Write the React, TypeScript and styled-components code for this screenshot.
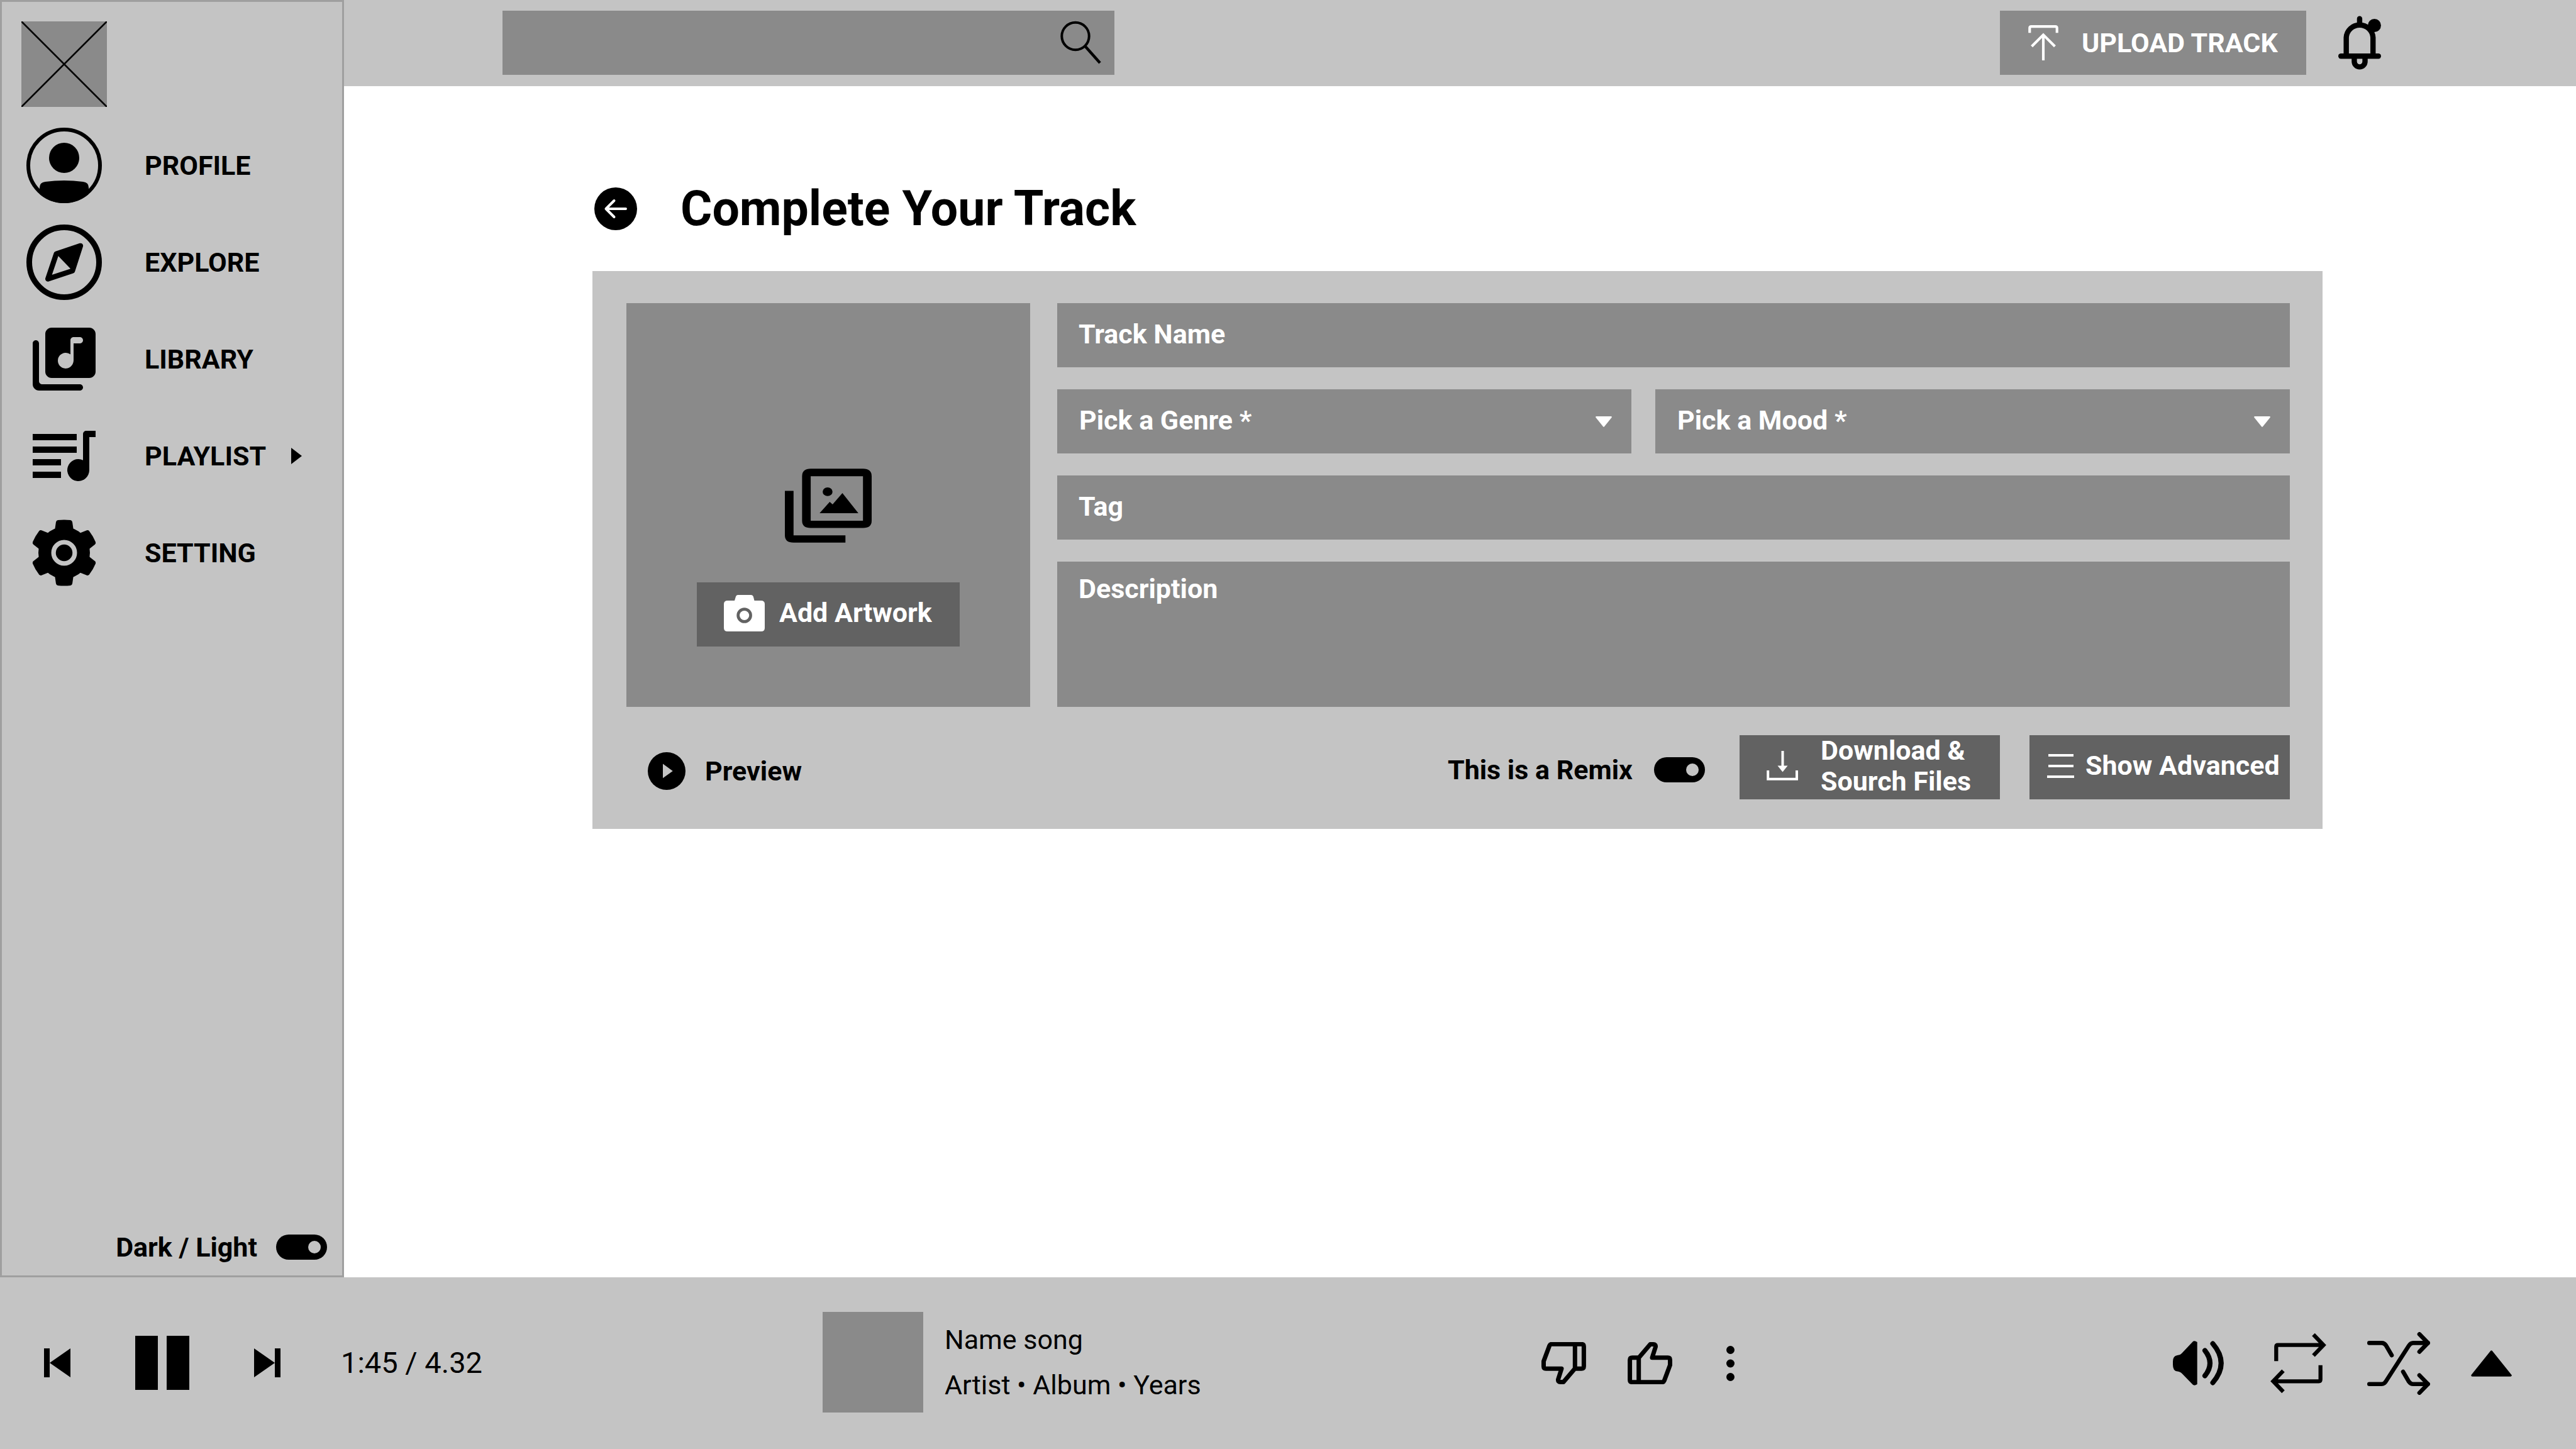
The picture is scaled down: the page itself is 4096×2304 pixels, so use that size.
import React from "react";
import styled, { createGlobalStyle } from "styled-components";

const color = {
  surface: "#c4c4c4",
  field: "#8a8a8a",
  dark: "#626262",
  line: "#9f9f9f",
  ink: "#000000",
  paper: "#ffffff",
};

const Global = createGlobalStyle`
  *, *::before, *::after { box-sizing: border-box; }
  body { margin: 0; background: ${color.paper}; color: ${color.ink}; }
  body, button, input, select, textarea {
    font-family: Roboto, "Liberation Sans", sans-serif;
    font-size: 43px;
    line-height: 49px;
    font-weight: 700;
  }
  button { border: 0; padding: 0; background: none; color: inherit; cursor: pointer; }
  a { color: inherit; text-decoration: none; }
  svg { display: block; flex: none; }
`;

const Page = styled.div`
  min-height: 100vh;
  display: flex;
  flex-direction: column;
`;

const Body = styled.div`
  flex: 1;
  display: flex;
`;

const Sidebar = styled.aside`
  width: 547px;
  flex: none;
  display: flex;
  flex-direction: column;
  padding: 31px 24px 25px 31px;
  background: ${color.surface};
  border: 3px solid ${color.line};
`;

const Logo = styled.a`
  width: 136px;
  height: 136px;
  background: ${color.field};
`;

const Nav = styled.nav`
  display: flex;
  flex-direction: column;
  gap: 34px;
  margin-top: 33px;
`;

const NavItem = styled.a`
  height: 120px;
  display: flex;
  align-items: center;
  gap: 60px;
`;

const NavIcon = styled.span`
  width: 136px;
  display: flex;
  justify-content: center;
`;

const NavText = styled.span`
  display: flex;
  align-items: center;
  gap: 40px;
`;

const ToggleLabel = styled.label<{ $gap: number }>`
  display: flex;
  align-items: center;
  gap: ${(p) => p.$gap}px;
  cursor: pointer;
`;

const ThemeRow = styled.div`
  margin-top: auto;
  display: flex;
  justify-content: flex-end;
  height: 40px;
  align-items: center;
`;

const Toggle = styled.input`
  appearance: none;
  margin: 0;
  width: 81px;
  height: 40px;
  padding: 0 10px;
  border-radius: 20px;
  background: ${color.ink};
  display: flex;
  align-items: center;
  justify-content: flex-start;
  cursor: pointer;
  &::before {
    content: "";
    width: 20px;
    height: 20px;
    border-radius: 50%;
    background: ${color.surface};
  }
  &:checked { justify-content: flex-end; }
`;

const Column = styled.div`
  flex: 1;
  min-width: 0;
`;

const Header = styled.header`
  display: flex;
  align-items: center;
  padding: 17px 310px 18px 252px;
  background: ${color.surface};
`;

const Search = styled.form`
  flex: 0 1 973px;
  height: 102px;
  display: flex;
  align-items: center;
  padding: 0 20px 0 34px;
  background: ${color.field};
`;

const SearchInput = styled.input`
  flex: 1;
  min-width: 0;
  border: 0;
  outline: 0;
  background: none;
  color: ${color.paper};
`;

const UploadButton = styled.button`
  margin-left: auto;
  width: 487px;
  height: 102px;
  display: flex;
  align-items: center;
  gap: 37px;
  padding-left: 45px;
  background: ${color.field};
  color: ${color.paper};
`;

const BellButton = styled.button`
  margin-left: 51px;
`;

const Main = styled.main`
  padding: 157px 403px 0 395px;
`;

const TitleRow = styled.div`
  display: flex;
  align-items: center;
  gap: 69px;
  padding-left: 3px;
`;

const Title = styled.h1`
  margin: 0;
  font-size: 77px;
  line-height: 76px;
  font-weight: 700;
`;

const Panel = styled.form`
  margin-top: 61px;
  padding: 51px 52px 47px 54px;
  background: ${color.surface};
`;

const PanelTop = styled.div`
  display: flex;
  gap: 43px;
`;

const Artwork = styled.div`
  width: 642px;
  height: 642px;
  flex: none;
  display: flex;
  flex-direction: column;
  align-items: center;
  justify-content: flex-end;
  gap: 63px;
  padding-bottom: 96px;
  background: ${color.field};
`;

const DarkButton = styled.button<{ $width: number; $gap: number; $pad: number }>`
  width: ${(p) => p.$width}px;
  height: 102px;
  display: flex;
  align-items: center;
  gap: ${(p) => p.$gap}px;
  padding: 0 0 5px ${(p) => p.$pad}px;
  background: ${color.dark};
  color: ${color.paper};
  text-align: left;
  white-space: nowrap;
`;

const Fields = styled.div`
  flex: 1;
  min-width: 0;
  display: flex;
  flex-direction: column;
  gap: 35px;
`;

const PickRow = styled.div`
  display: grid;
  grid-template-columns: 913fr 1009fr;
  gap: 38px;
`;

const TextField = styled.input`
  height: 102px;
  border: 0;
  border-radius: 0;
  outline: 0;
  padding: 0 34px 4px;
  background: ${color.field};
  color: ${color.paper};
  &::placeholder { color: ${color.paper}; opacity: 1; }
`;

const TextArea = styled.textarea`
  flex: 1;
  border: 0;
  outline: 0;
  resize: none;
  padding: 19px 34px;
  background: ${color.field};
  color: ${color.paper};
  &::placeholder { color: ${color.paper}; opacity: 1; }
`;

const PickBox = styled.div`
  height: 102px;
  display: flex;
  align-items: center;
  padding: 0 31px 0 35px;
  background: ${color.field};
`;

const Select = styled.select`
  appearance: none;
  flex: 1;
  min-width: 0;
  border: 0;
  outline: 0;
  padding: 0 0 4px;
  background: none;
  color: ${color.paper};
`;

const PanelBottom = styled.div`
  margin-top: 45px;
  display: flex;
  align-items: center;
`;

const PreviewButton = styled.button`
  display: flex;
  align-items: center;
  gap: 31px;
  padding: 12px 0 0 34px;
`;

const RemixBox = styled.div`
  margin: 0 55px 0 auto;
  padding-top: 8px;
`;

const PanelActions = styled.div`
  display: flex;
  gap: 47px;
`;

const Player = styled.footer`
  display: grid;
  grid-template-columns: 1308fr 1143fr 1645fr;
  align-items: center;
  padding: 55px 0 58px;
  background: ${color.surface};
  font-weight: 400;
`;

const Transport = styled.div`
  display: flex;
  align-items: center;
  gap: 96px;
  padding: 2px 0 0 70px;
`;

const Time = styled.span`
  font-size: 47px;
  line-height: 54px;
`;

const Song = styled.div`
  display: flex;
  align-items: center;
  gap: 34px;
`;

const Cover = styled.div`
  width: 160px;
  height: 160px;
  background: ${color.field};
`;

const SongLine = styled.p`
  margin: 0;
  line-height: 72px;
`;

const PlayerEnd = styled.div`
  display: flex;
  align-items: center;
  justify-content: space-between;
  padding: 3px 102px 0 0;
`;

const IconRow = styled.div<{ $gap: number }>`
  display: flex;
  align-items: center;
  gap: ${(p) => p.$gap}px;
`;

const MoreButton = styled.button`
  padding: 0 20px;
`;

const stroke = { fill: "none", stroke: "currentColor" } as const;

const LogoMark = () => (
  <svg width="136" height="136" viewBox="0 0 136 136" {...stroke} strokeWidth="2.5" strokeLinecap="round">
    <path d="M1 1 135 135M135 1 1 135" />
  </svg>
);

const ProfileIcon = () => (
  <svg width="120" height="120" viewBox="0 0 120 120">
    <circle cx="60" cy="60" r="57" {...stroke} strokeWidth="6" />
    <circle cx="60" cy="48" r="24" />
    <path d="M21 105.600V95Q21 87 30 86Q60 82 90 86Q99 87 99 95V105.600A60 60 0 0 1 21 105.600Z" />
  </svg>
);

const ExploreIcon = () => (
  <svg width="120" height="120" viewBox="-60 -60 120 120">
    <circle r="55.500" {...stroke} strokeWidth="9" />
    <path d="M-12.500 -13.300 26 -26.200 13.200 13.600Z" />
    <path d="M-12.500 -13.300 26 -26.200 13.200 13.600 -25.900 26.500Z" {...stroke} strokeWidth="8.300" strokeLinejoin="round" />
  </svg>
);

const LibraryIcon = () => (
  <svg width="120" height="120" viewBox="0 0 24 24">
    <path d="M20 2H8c-1.100 0-2 .9-2 2v12c0 1.100.9 2 2 2h12c1.100 0 2-.9 2-2V4c0-1.100-.9-2-2-2zm-3 5h-2v5.370c0 1.270-.9 2.440-2.160 2.600-1.690.23-3.110-1.250-2.800-2.950.2-1.100 1.180-1.950 2.300-2.020.63-.04 1.200.16 1.660.51V6c0-.55.45-1 1-1h2c.55 0 1 .45 1 1s-.45 1-1 1zM3 6c-.55 0-1 .45-1 1v13c0 1.100.9 2 2 2h13c.55 0 1-.45 1-1s-.45-1-1-1H5c-.55 0-1-.45-1-1V7c0-.55-.45-1-1-1z" />
  </svg>
);

const PlaylistIcon = () => (
  <svg width="120" height="120" viewBox="0 0 24 24">
    <path d="M2 5h14v2H2zM2 9h14v2H2zM2 13h9v2H2zM2 17h9v2H2z" />
    <path d="M22 4v2h-2v10.500a3.500 3.500 0 1 1-2-3.160V5a1 1 0 0 1 1-1z" />
  </svg>
);

const SettingIcon = () => (
  <svg width="120" height="120" viewBox="-12 -12 24 24">
    <circle r="6.150" {...stroke} strokeWidth="4.100" />
    <circle r="2.650" />
    {[0, 60, 120, 180, 240, 300].map((a) => (
      <path
        key={a}
        transform={`rotate(${a})`}
        d="M-2.950 -7.400L-2.600 -9.800Q-2.500 -10.300 -2 -10.380Q0 -10.650 2 -10.380Q2.500 -10.300 2.600 -9.800L2.950 -7.400Z"
      />
    ))}
  </svg>
);

const RightCaret = () => (
  <svg width="17" height="26" viewBox="0 0 17 26">
    <path d="M0 0 17 13 0 26Z" />
  </svg>
);

const SearchIcon = () => (
  <svg width="66" height="70" viewBox="0 0 66 70" {...stroke} strokeWidth="4">
    <circle cx="24" cy="24.500" r="21.700" />
    <path d="M39 40 63 67" strokeWidth="4.500" />
  </svg>
);

const UploadIcon = () => (
  <svg width="48" height="56" viewBox="0 0 62 73" {...stroke} strokeWidth="5.400">
    <path d="M2.700 16V6Q2.700 2.700 6 2.700H56Q59.300 2.700 59.300 6V16M31 73V19.500M7 44 31 20 55 44" />
  </svg>
);

const BellIcon = () => (
  <svg width="68" height="86" viewBox="0 0 89 112">
    <g {...stroke} strokeWidth="11">
      <path d="M16.600 80V45.200A27.900 27.900 0 0 1 72.300 45.200V80" />
      <path d="M44.400 16V5.800" strokeLinecap="round" />
      <path d="M33.300 86V95A11.200 11.200 0 0 0 55.700 95V86" />
      <path d="M5.500 83.800H83.500" strokeLinecap="round" />
    </g>
    <circle cx="75.200" cy="20" r="13.700" />
  </svg>
);

const BackIcon = () => (
  <svg width="68" height="68" viewBox="0 0 68 68">
    <circle cx="34" cy="34" r="34" />
    <path d="M31.500 21 18.500 34 31.500 47M18.500 34H50" fill="none" stroke="#fff" strokeWidth="4" strokeLinecap="round" strokeLinejoin="round" />
  </svg>
);

const PhotosIcon = () => (
  <svg width="138" height="118" viewBox="0 0 180 153">
    <path d="M0 46H18V138H125.600V153H18Q0 153 0 138Z" />
    <path fillRule="evenodd" d="M53.600 0H162Q180 0 180 15.500V107.700Q180 122.700 162 122.700H53.600Q35.700 122.700 35.700 107.700V15.500Q35.700 0 53.600 0ZM53.600 15.500V107.700H162V15.500Z" />
    <ellipse cx="88.600" cy="47.700" rx="10.200" ry="9" />
    <path d="M72 92 93 68.600 99 74 119.300 50.400 152.400 92Z" />
  </svg>
);

const CameraIcon = () => (
  <svg width="65" height="58" viewBox="0 0 65 58">
    <path
      fill="#fff"
      fillRule="evenodd"
      d="M17 9 19 2.500Q19.700 0 22 0H43.500Q46 0 46.800 2.500L48.500 9H59Q65 9 65 14.500V52.500Q65 58 59 58H6Q0 58 0 52.500V14.500Q0 9 6 9ZM32.600 20.200A12.300 12.300 0 1 0 32.600 44.800A12.300 12.300 0 1 0 32.600 20.200Z"
    />
    <circle cx="32.600" cy="32.500" r="7.600" fill="#fff" />
  </svg>
);

const DownCaret = () => (
  <svg width="26" height="17" viewBox="0 0 26 17" fill="#fff">
    <path d="M1 0H25Q26.500 .5 25.500 2L14 16.300Q13 17.300 12 16.300L.5 2Q-.5 .5 1 0Z" />
  </svg>
);

const PreviewIcon = () => (
  <svg width="60" height="60" viewBox="0 0 78 78">
    <circle cx="39" cy="39" r="39" />
    <path d="M31.200 24 51.700 39 31.200 53.700Z" fill={color.surface} />
  </svg>
);

const DownloadIcon = () => (
  <svg width="50" height="47" viewBox="0 0 50 47" {...stroke} strokeWidth="4">
    <path d="M25.500 0V25" />
    <path d="M17.500 23.500H33.500L25.500 33.500Z" fill="currentColor" stroke="none" />
    <path d="M2.200 31V44.800H48V31" />
  </svg>
);

const MenuIcon = () => (
  <svg width="43" height="38" viewBox="0 0 43 38" {...stroke} strokeWidth="4">
    <path d="M2 2H42M2 19H42M0 36H43" />
  </svg>
);

const PreviousIcon = () => (
  <svg width="42" height="46" viewBox="0 0 42 46">
    <path d="M0 0H9V46H0ZM42 0V46L9 23Z" />
  </svg>
);

const NextIcon = () => (
  <svg width="42" height="46" viewBox="0 0 42 46">
    <path d="M42 0H33V46H42ZM0 0V46L33 23Z" />
  </svg>
);

const PauseIcon = () => (
  <svg width="86" height="86" viewBox="0 0 86 86">
    <path d="M0 0H36V86H0ZM50 0H86V86H50Z" />
  </svg>
);

const ThumbIcon = ({ down = false }: { down?: boolean }) => (
  <svg width="71" height="67" viewBox="0 0 71 67" {...stroke} strokeWidth="7" strokeLinejoin="round">
    <path
      transform={down ? "rotate(180 35.500 33.500)" : undefined}
      d="M17.700 24.800H7.500Q3.600 24.800 3.600 28.500V60Q3.600 63.700 7.500 63.700H55Q57.300 63.700 58.200 61.500L67.500 36.500V28.500Q67.500 24.800 64 24.800H39L44.500 7.500Q45 3.500 41 3.500H36L17.700 25V63.700"
    />
  </svg>
);

const MoreIcon = () => (
  <svg width="13" height="56" viewBox="0 0 13 56">
    <circle cx="6.500" cy="6.500" r="6.500" />
    <circle cx="6.500" cy="28" r="6.500" />
    <circle cx="6.500" cy="49.500" r="6.500" />
  </svg>
);

const VolumeIcon = () => (
  <svg width="90" height="71" viewBox="0 0 90 71">
    <path d="M7 23Q0 24 0 33V38Q0 48 7 48.500Q12 49 14.500 52L31.500 69.500Q34 72 38.700 69V2Q34 -1 31.500 1.500L14.500 19.500Q12 22.500 7 23Z" />
    <path d="M51 15.400Q67 35.500 51 55.600M63.500 4.500Q90 35.500 63.500 66.500" {...stroke} strokeWidth="8" strokeLinecap="round" />
  </svg>
);

const RepeatIcon = () => (
  <svg width="89" height="95" viewBox="0 0 89 95" {...stroke} strokeWidth="6.300">
    <path d="M9.300 44.300V21.500Q9.300 18.700 12 18.700H84M68.500 2 84.500 18.700 68.500 35.400" />
    <path transform="rotate(180 44.500 47.500)" d="M9.300 44.300V21.500Q9.300 18.700 12 18.700H84M68.500 2 84.500 18.700 68.500 35.400" />
  </svg>
);

const ShuffleIcon = () => (
  <svg width="100" height="100" viewBox="0 0 100 100" {...stroke} strokeWidth="6.600" strokeLinecap="round" strokeLinejoin="round">
    <path d="M3.300 82.700H23Q27.500 82.700 30 78L66 22Q69 17.400 73 17.400H96.500" />
    <path d="M3.300 17.400H23Q27.500 17.400 30 21.500L39 37M57 63 66 78.500Q69 82.700 73 82.700H96.500" />
    <path d="M83 3.400 96.600 17.400 83 31.400M83 68.700 96.600 82.700 83 96.700" />
  </svg>
);

const UpIcon = () => (
  <svg width="65" height="42" viewBox="0 0 65 42">
    <path d="M32.500 2 63 40H2Z" stroke="currentColor" strokeWidth="3.500" strokeLinejoin="round" />
  </svg>
);

const navItems = [
  { text: "PROFILE", Icon: ProfileIcon },
  { text: "EXPLORE", Icon: ExploreIcon },
  { text: "LIBRARY", Icon: LibraryIcon },
  { text: "PLAYLIST", Icon: PlaylistIcon, more: true },
  { text: "SETTING", Icon: SettingIcon },
];

export default function App() {
  return (
    <Page>
      <Global />
      <Body>
        <Sidebar>
          <Logo href="#" aria-label="Home">
            <LogoMark />
          </Logo>
          <Nav>
            {navItems.map(({ text, Icon, more }) => (
              <NavItem href="#" key={text}>
                <NavIcon>
                  <Icon />
                </NavIcon>
                <NavText>
                  {text}
                  {more && <RightCaret />}
                </NavText>
              </NavItem>
            ))}
          </Nav>
          <ThemeRow>
            <ToggleLabel $gap={30}>
              Dark / Light
              <Toggle type="checkbox" defaultChecked />
            </ToggleLabel>
          </ThemeRow>
        </Sidebar>
        <Column>
          <Header>
            <Search role="search">
              <SearchInput type="search" aria-label="Search" />
              <SearchIcon />
            </Search>
            <UploadButton type="button">
              <UploadIcon />
              UPLOAD TRACK
            </UploadButton>
            <BellButton type="button" aria-label="Notifications">
              <BellIcon />
            </BellButton>
          </Header>
          <Main>
            <TitleRow>
              <button type="button" aria-label="Back">
                <BackIcon />
              </button>
              <Title>Complete Your Track</Title>
            </TitleRow>
            <Panel>
              <PanelTop>
                <Artwork>
                  <PhotosIcon />
                  <DarkButton type="button" $width={418} $gap={23} $pad={43}>
                    <CameraIcon />
                    Add Artwork
                  </DarkButton>
                </Artwork>
                <Fields>
                  <TextField aria-label="Track Name" placeholder="Track Name" />
                  <PickRow>
                    <PickBox>
                      <Select aria-label="Genre">
                        <option>Pick a Genre *</option>
                      </Select>
                      <DownCaret />
                    </PickBox>
                    <PickBox>
                      <Select aria-label="Mood">
                        <option>Pick a Mood *</option>
                      </Select>
                      <DownCaret />
                    </PickBox>
                  </PickRow>
                  <TextField aria-label="Tag" placeholder="Tag" />
                  <TextArea aria-label="Description" placeholder="Description" />
                </Fields>
              </PanelTop>
              <PanelBottom>
                <PreviewButton type="button">
                  <PreviewIcon />
                  Preview
                </PreviewButton>
                <RemixBox>
                  <ToggleLabel $gap={34}>
                    This is a Remix
                    <Toggle type="checkbox" defaultChecked />
                  </ToggleLabel>
                </RemixBox>
                <PanelActions>
                  <DarkButton type="button" $width={414} $gap={36} $pad={43}>
                    <DownloadIcon />
                    <span>
                      Download &amp;
                      <br />
                      Sourch Files
                    </span>
                  </DarkButton>
                  <DarkButton type="button" $width={414} $gap={18} $pad={28}>
                    <MenuIcon />
                    Show Advanced
                  </DarkButton>
                </PanelActions>
              </PanelBottom>
            </Panel>
          </Main>
        </Column>
      </Body>
      <Player>
        <Transport>
          <IconRow $gap={103}>
            <button type="button" aria-label="Previous">
              <PreviousIcon />
            </button>
            <button type="button" aria-label="Pause">
              <PauseIcon />
            </button>
            <button type="button" aria-label="Next">
              <NextIcon />
            </button>
          </IconRow>
          <Time>1:45 / 4.32</Time>
        </Transport>
        <Song>
          <Cover />
          <div>
            <SongLine>Name song</SongLine>
            <SongLine>Artist • Album • Years</SongLine>
          </div>
        </Song>
        <PlayerEnd>
          <IconRow $gap={66}>
            <button type="button" aria-label="Dislike">
              <ThumbIcon down />
            </button>
            <button type="button" aria-label="Like">
              <ThumbIcon />
            </button>
            <MoreButton type="button" aria-label="More">
              <MoreIcon />
            </MoreButton>
          </IconRow>
          <IconRow $gap={65}>
            <button type="button" aria-label="Volume">
              <VolumeIcon />
            </button>
            <button type="button" aria-label="Repeat">
              <RepeatIcon />
            </button>
            <button type="button" aria-label="Shuffle">
              <ShuffleIcon />
            </button>
            <button type="button" aria-label="Expand player">
              <UpIcon />
            </button>
          </IconRow>
        </PlayerEnd>
      </Player>
    </Page>
  );
}
